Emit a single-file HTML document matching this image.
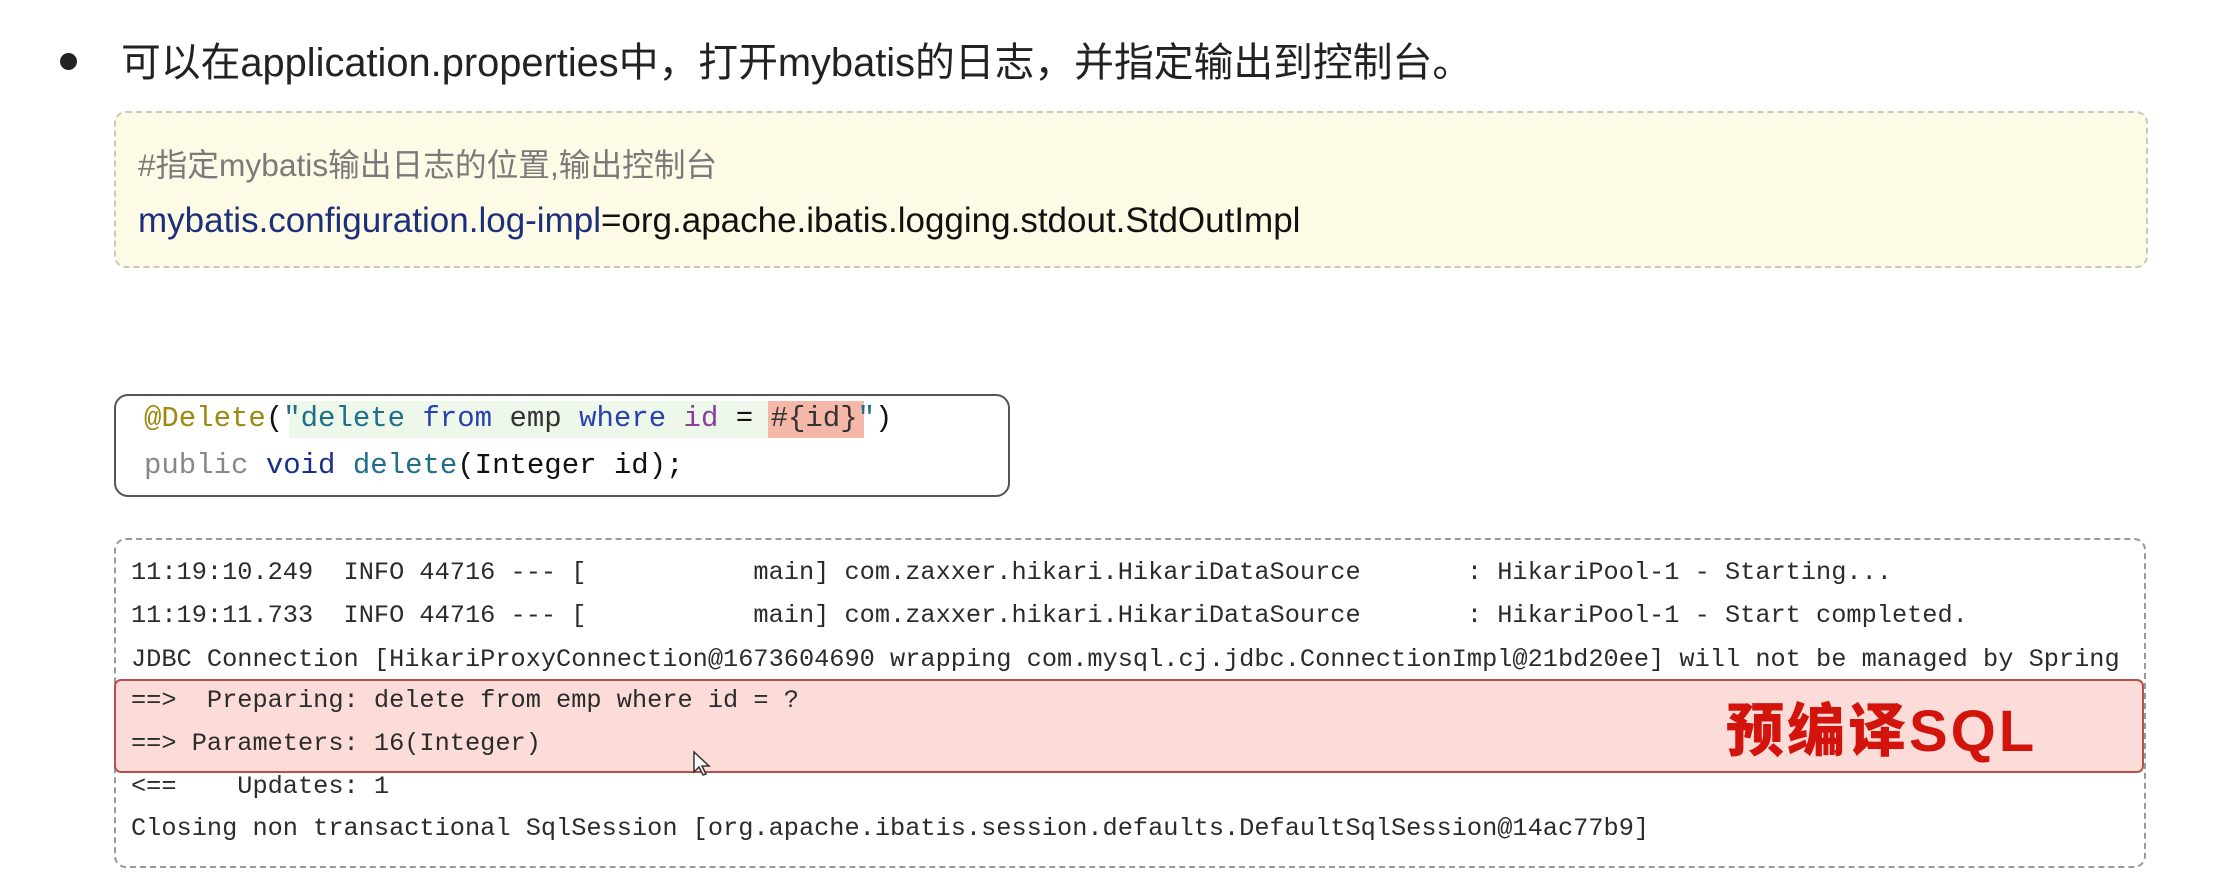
<!DOCTYPE html>
<html><head><meta charset="utf-8"><style>
html,body{margin:0;padding:0;background:#fff;width:2231px;height:891px;overflow:hidden;position:relative}
.a{position:absolute;white-space:pre}
.cjk{font-family:"Liberation Sans","Noto Sans CJK SC",sans-serif}
.mono{font-family:"Liberation Mono","DejaVu Sans Mono",monospace}
.log{font-size:25.3px;color:#2b2b2b;left:131px;line-height:30px}
</style></head><body>
<div class="a" style="left:60px;top:53px;width:17px;height:17px;border-radius:50%;background:#222"></div>
<div class="a cjk" style="left:121px;top:38px;font-size:39.8px;line-height:50px;color:#222">可以在application.properties中，打开mybatis的日志，并指定输出到控制台。</div>

<div class="a" style="left:114px;top:111px;width:2030px;height:153px;background:#fdfbe5;border:2px dashed #c8c8c0;border-radius:12px"></div>
<div class="a cjk" style="left:138px;top:146px;font-size:31.7px;line-height:38px;color:#7a7a7a">#指定mybatis输出日志的位置,输出控制台</div>
<div class="a cjk" style="left:138px;top:200px;font-size:35px;line-height:42px;color:#111"><span style="color:#1b2f7a">mybatis.configuration.log-impl</span>=org.apache.ibatis.logging.stdout.StdOutImpl</div>

<div class="a" style="left:114px;top:394px;width:896px;height:103px;border:2px solid #555;border-radius:14px;box-sizing:border-box"></div>
<div class="a" style="left:289px;top:401px;width:479px;height:37px;background:#edf7ea"></div>
<div class="a" style="left:768px;top:401px;width:96px;height:37px;background:#f5b8a8"></div>
<div class="a mono" style="left:144px;top:402px;font-size:29px;line-height:34px;color:#111"><span style="color:#9e880d">@Delete</span>(<span style="color:#1f6f8b">"delete</span> <span style="color:#2a3fb0">from</span> <span style="color:#333">emp</span> <span style="color:#2a3fb0">where</span> <span style="color:#8a3fa0">id</span> = <span style="color:#333">#{id}</span><span style="color:#1f6f8b">"</span>)</div>
<div class="a mono" style="left:144px;top:449px;font-size:29px;line-height:34px;color:#111"><span style="color:#888">public</span> <span style="color:#1b2f8a">void</span> <span style="color:#1f6f8b">delete</span>(Integer id);</div>

<div class="a" style="left:114px;top:538px;width:2032px;height:330px;border:2px dashed #999;border-radius:12px;box-sizing:border-box"></div>
<div class="a" style="left:114px;top:679px;width:2030px;height:94px;background:#fcdcd8;border:2px solid #b8504a;border-radius:7px;box-sizing:border-box"></div>

<div class="a mono log" style="top:558px">11:19:10.249  INFO 44716 --- [           main] com.zaxxer.hikari.HikariDataSource       : HikariPool-1 - Starting...</div>
<div class="a mono log" style="top:601px">11:19:11.733  INFO 44716 --- [           main] com.zaxxer.hikari.HikariDataSource       : HikariPool-1 - Start completed.</div>
<div class="a mono log" style="top:645px">JDBC Connection [HikariProxyConnection@1673604690 wrapping com.mysql.cj.jdbc.ConnectionImpl@21bd20ee] will not be managed by Spring</div>
<div class="a mono log" style="top:686px">==>  Preparing: delete from emp where id = ?</div>
<div class="a mono log" style="top:729px">==> Parameters: 16(Integer)</div>
<div class="a mono log" style="top:772px">&lt;==    Updates: 1</div>
<div class="a mono log" style="top:814px">Closing non transactional SqlSession [org.apache.ibatis.session.defaults.DefaultSqlSession@14ac77b9]</div>

<div class="a" style="left:1726px;top:697px;font-family:'Liberation Sans','Noto Sans CJK SC',sans-serif;font-weight:900;font-size:58px;line-height:70px;color:#d2140c;letter-spacing:3px">预编译SQL</div>

<svg class="a" style="left:692px;top:750px" width="20" height="28" viewBox="0 0 20 28"><path d="M2 2 L2 22 L7 17 L11 25 L14 24 L10 16 L17 16 Z" fill="#fff" stroke="#333" stroke-width="1.5"/></svg>
</body></html>
